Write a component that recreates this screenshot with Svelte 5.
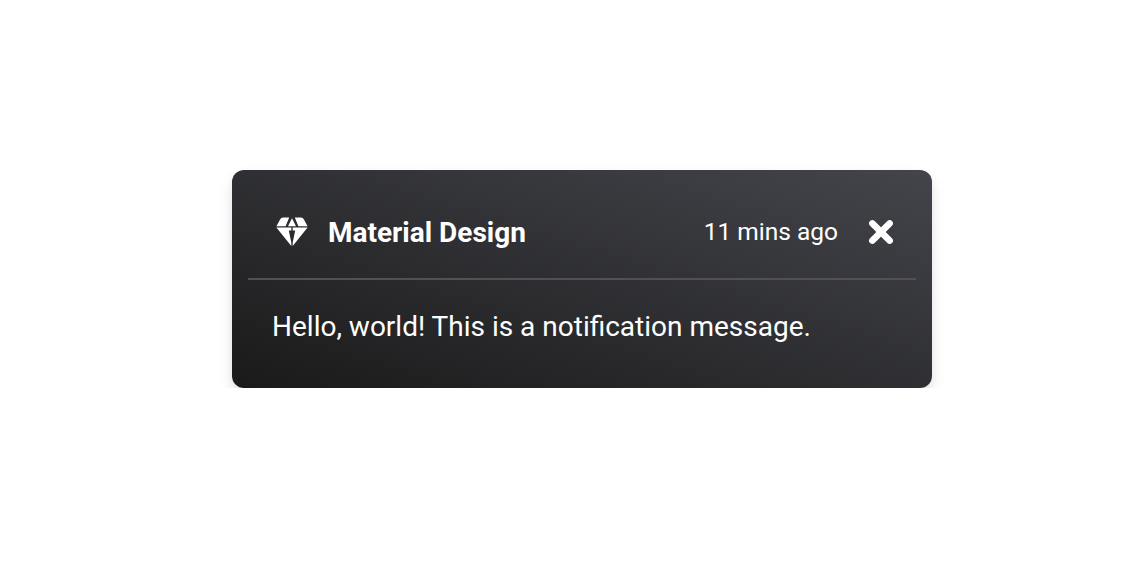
<script>
  let title = 'Material Design'
  let time = '11 mins ago'
  let message = 'Hello, world! This is a notification message.'
</script>

<div class="page">
  <div class="toast">
    <div class="toast__header">
      <svg class="toast__icon" viewBox="0 0 32 30" aria-hidden="true">
        <path d="M7.2 0.5H13.2L9.6 9.2H0.4L4.2 2.2Q5 0.5 7.2 0.5Z" />
        <path d="M16 1.2L20 9.2H12Z" />
        <path d="M18.8 0.5H24.8Q27 0.5 27.8 2.2L31.6 9.2H22.4Z" />
        <path d="M0.4 10.4H15.3V13.4H12.8L15.3 25.6V29L0.4 10.4Z" />
        <path d="M31.6 10.4H16.7V13.4H19.2L16.7 25.6V29L31.6 10.4Z" />
      </svg>
      <strong class="toast__title">{title}</strong>
      <small class="toast__time">{time}</small>
      <button class="toast__close" aria-label="Close">
        <svg viewBox="0 0 24 24" aria-hidden="true">
          <path d="M4 4L20 20M20 4L4 20" />
        </svg>
      </button>
    </div>
    <div class="toast__body">{message}</div>
  </div>
</div>

<style>
  :global(body) {
    background: #fff;
  }
  .page {
    display: flex;
    justify-content: flex-start;
    padding: 170px 0 0 232px;
    font-family: Roboto, sans-serif;
  }
  .toast {
    width: 700px;
    height: 218px;
    box-sizing: border-box;
    border-radius: 12px;
    color: #fff;
    background: linear-gradient(to top right, #1a1a1a, #44454c);
    box-shadow: 0 8px 16px -2px rgba(0, 0, 0, .13), 0 2px 8px rgba(0, 0, 0, .04);
  }
  .toast__header {
    display: flex;
    align-items: center;
    height: 110px;
    box-sizing: border-box;
    margin: 0 16px;
    padding: 16px 22px 0 28px;
    border-bottom: 2px solid #505055;
  }
  .toast__icon {
    width: 32px;
    height: 30px;
    fill: #fff;
    margin-right: 20px;
  }
  .toast__title {
    flex: 1;
    font-size: 28px;
    font-weight: 700;
  }
  .toast__time {
    font-size: 24.5px;
    font-weight: 400;
    margin: 0 30px 2px 0;
  }
  .toast__close {
    width: 26px;
    height: 26px;
    padding: 0;
    border: 0;
    background: none;
  }
  .toast__close svg {
    display: block;
    width: 26px;
    height: 26px;
    fill: none;
    stroke: #fff;
    stroke-width: 6;
    stroke-linecap: round;
  }
  .toast__body {
    padding: 29px 40px;
    font-size: 28px;
    line-height: 36px;
    font-weight: 400;
  }
</style>
